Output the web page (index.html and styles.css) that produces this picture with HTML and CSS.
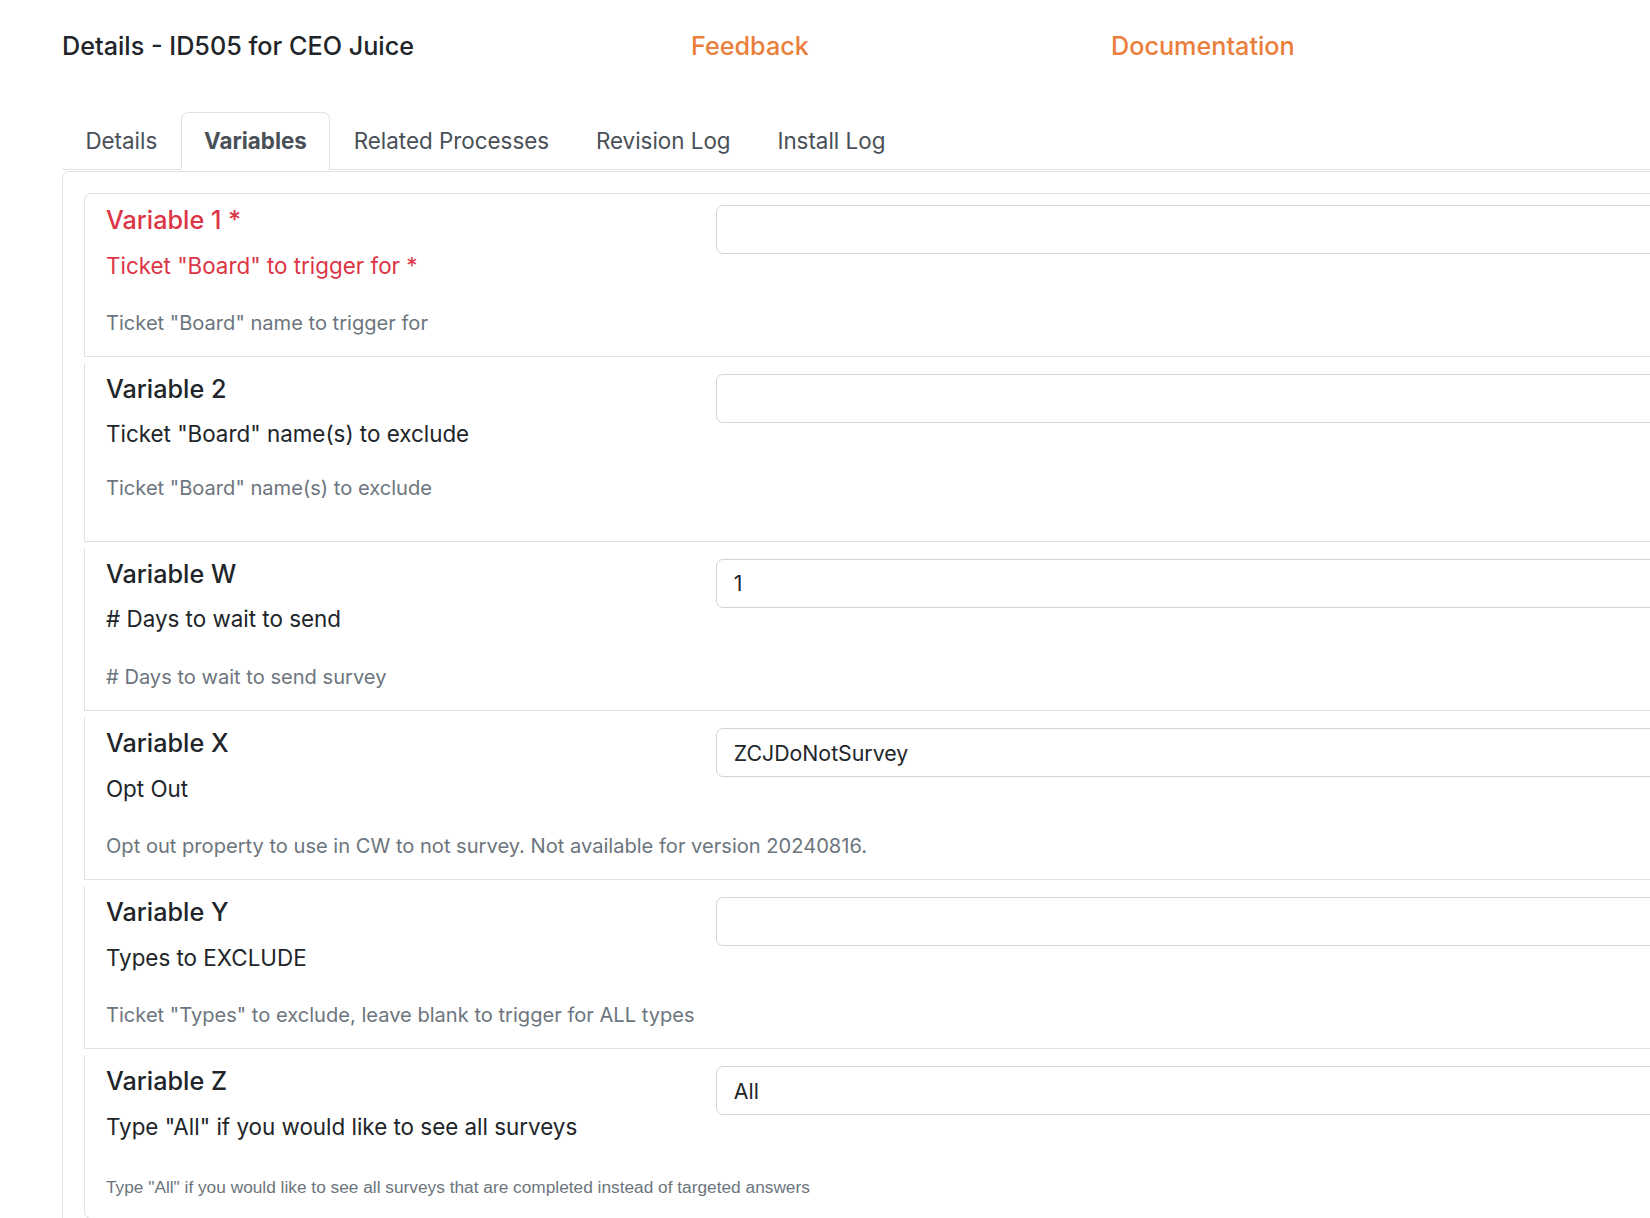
FILE: index.html
```
<!DOCTYPE html>
<html lang="en">
<head>
<meta charset="utf-8">
<title>Details - ID505 for CEO Juice</title>
<link rel="stylesheet" href="styles.css">
</head>
<body>
<div class="page">
  <header class="top">
    <h1 class="title">Details - ID505 for CEO Juice</h1>
    <a class="ext feedback" href="#">Feedback</a>
    <a class="ext docs" href="#">Documentation</a>
  </header>

  <ul class="tabs">
    <li class="tab">Details</li>
    <li class="tab active">Variables</li>
    <li class="tab">Related Processes</li>
    <li class="tab">Revision Log</li>
    <li class="tab">Install Log</li>
  </ul>

  <div class="pane">
    <div class="var-list">
      <div class="var-row first">
        <div class="var-info">
          <h5 class="var-name req">Variable 1 *</h5>
          <div class="var-label req">Ticket "Board" to trigger for *</div>
          <div class="var-help">Ticket "Board" name to trigger for</div>
        </div>
        <div class="var-field"><input class="field" type="text" value=""></div>
      </div>

      <div class="var-row tall">
        <div class="var-info">
          <h5 class="var-name">Variable 2</h5>
          <div class="var-label">Ticket "Board" name(s) to exclude</div>
          <div class="var-help">Ticket "Board" name(s) to exclude</div>
        </div>
        <div class="var-field"><input class="field" type="text" value=""></div>
      </div>

      <div class="var-row">
        <div class="var-info">
          <h5 class="var-name">Variable W</h5>
          <div class="var-label"># Days to wait to send</div>
          <div class="var-help"># Days to wait to send survey</div>
        </div>
        <div class="var-field"><input class="field" type="text" value="1"></div>
      </div>

      <div class="var-row">
        <div class="var-info">
          <h5 class="var-name">Variable X</h5>
          <div class="var-label">Opt Out</div>
          <div class="var-help">Opt out property to use in CW to not survey. Not available for version 20240816.</div>
        </div>
        <div class="var-field"><input class="field" type="text" value="ZCJDoNotSurvey"></div>
      </div>

      <div class="var-row">
        <div class="var-info">
          <h5 class="var-name">Variable Y</h5>
          <div class="var-label">Types to EXCLUDE</div>
          <div class="var-help">Ticket "Types" to exclude, leave blank to trigger for ALL types</div>
        </div>
        <div class="var-field"><input class="field" type="text" value=""></div>
      </div>

      <div class="var-row last">
        <div class="var-info">
          <h5 class="var-name">Variable Z</h5>
          <div class="var-label">Type "All" if you would like to see all surveys</div>
          <div class="var-help small-sans">Type "All" if you would like to see all surveys that are completed instead of targeted answers</div>
        </div>
        <div class="var-field"><input class="field" type="text" value="All"></div>
      </div>
    </div>
  </div>
</div>
</body>
</html>
```

FILE: styles.css
```
html, body {
  margin: 0;
  padding: 0;
  overflow: hidden;
  background: #ffffff;
}

body {
  font-family: Inter, "Noto Sans", "Liberation Sans", sans-serif;
  font-size: 22.4px;
  line-height: 1.5;
  color: #212529;
}

.page {
  width: 2300px;
  padding-left: 62px;
  box-sizing: border-box;
}

/* header */
.top {
  display: flex;
  align-items: center;
  height: 30px;
  padding-top: 31px;
  margin-bottom: 51px;
}

.title {
  flex: 0 0 629px;
  margin: 0;
  font-size: 25.2px;
  font-weight: 500;
  line-height: 30px;
  color: #212529;
}

.ext {
  font-size: 25.2px;
  font-weight: 500;
  line-height: 30px;
  color: #ea7e3b;
  text-decoration: none;
}

.feedback {
  flex: 0 0 420px;
}

/* tabs */
.tabs {
  display: flex;
  list-style: none;
  margin: 0;
  padding: 0;
  border-bottom: 1px solid #dee2e6;
}

.tab {
  padding: 11.2px 22.4px;
  line-height: 33.6px;
  border: 1px solid transparent;
  border-top-left-radius: 7px;
  border-top-right-radius: 7px;
  margin-bottom: -1px;
  color: #495057;
}

.tab.active {
  font-weight: 700;
  border-color: #dee2e6 #dee2e6 #ffffff;
  background: #ffffff;
}

/* pane */
.pane {
  margin-top: 1px;
  border: 1px solid #dee2e6;
  border-top-left-radius: 7px;
  padding: 21px;
  min-height: 1100px;
}

.var-row {
  display: grid;
  grid-template-columns: 610px 1fr;
  padding-left: 21px;
  border-left: 1px solid #dee2e6;
  border-right: 1px solid #dee2e6;
  border-bottom: 1px solid #dee2e6;
  margin-top: 6px;
}

.var-row.first {
  margin-top: 0;
  border-top: 1px solid #dee2e6;
  border-top-left-radius: 7px;
  border-top-right-radius: 7px;
}

.var-row.last {
  border-bottom-left-radius: 7px;
  border-bottom-right-radius: 7px;
}

.var-info {
  padding-top: 10px;
  padding-bottom: 17.6px;
}

.var-name {
  margin: 0 0 11px;
  font-size: 25.2px;
  font-weight: 500;
  line-height: 33.6px;
}

.var-label {
  font-size: 22.4px;
  line-height: 33.6px;
  white-space: nowrap;
}

.req {
  color: #dc3545;
}

.var-help {
  margin-top: 27px;
  font-size: 20.1px;
  line-height: 29.4px;
  color: #6c757d;
  white-space: nowrap;
}

.var-row.first .var-help {
  margin-top: 26.5px;
}

.var-row.tall .var-help {
  margin-top: 23px;
  margin-bottom: 20px;
}

.var-help.small-sans {
  font-family: "Liberation Sans", Arial, sans-serif;
  font-size: 17.3px;
  margin-top: 29px;
  margin-bottom: -1.6px;
}

.var-field {
  padding-top: 11px;
}

.field {
  display: block;
  box-sizing: border-box;
  width: 100%;
  height: 49px;
  padding: 0 16.8px;
  border: 1px solid #ced4da;
  border-radius: 7px;
  font-family: Inter, "Noto Sans", "Liberation Sans", sans-serif;
  font-size: 21.3px;
  color: #212529;
  background: #ffffff;
  outline: none;
}
```
